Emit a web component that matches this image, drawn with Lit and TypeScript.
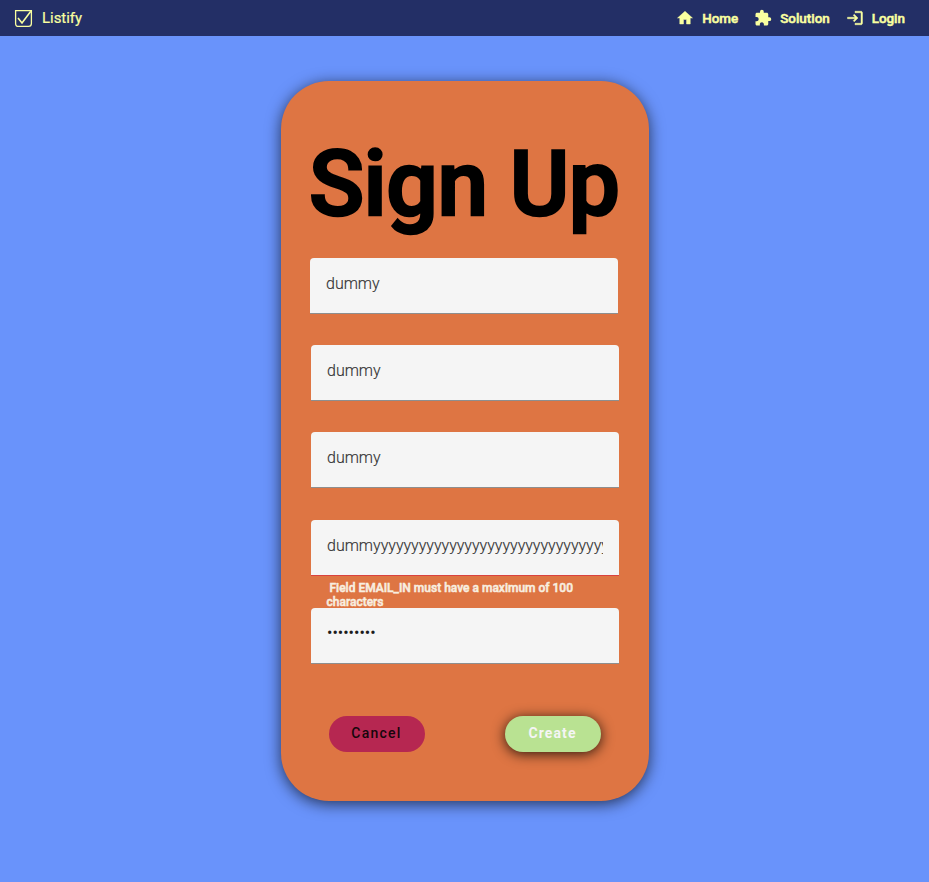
import { LitElement, html, css, svg } from "lit";
import { customElement, property } from "lit/decorators.js";

const icons = {
  home: svg`<path stroke="currentColor" stroke-width=".6" d="M10 20v-6h4v6h5v-8h3L12 3 2 12h3v8z"/>`,
  solution: svg`<path d="M20.500 11H19V7c0-1.100-.9-2-2-2h-4V3.500a2.500 2.500 0 0 0-5 0V5H4c-1.100 0-1.990.9-1.990 2v3.800H3.500c1.490 0 2.700 1.210 2.700 2.700s-1.210 2.700-2.700 2.700H2V20c0 1.100.9 2 2 2h3.800v-1.500c0-1.490 1.210-2.700 2.700-2.700s2.700 1.210 2.700 2.700V22H17c1.100 0 2-.9 2-2v-4h1.500a2.500 2.500 0 0 0 0-5z"/>`,
  login: svg`<path stroke="currentColor" stroke-width=".6" d="M11 7 9.600 8.400l2.600 2.600H2v2h10.200l-2.600 2.600L11 17l5-5zM20 19h-8v2h8c1.100 0 2-.9 2-2V5c0-1.100-.9-2-2-2h-8v2h8z"/>`,
};

@customElement("nav-bar")
export class NavBar extends LitElement {
  static styles = css`
    :host {
      display: flex;
      align-items: center;
      justify-content: space-between;
      box-sizing: border-box;
      height: 36px;
      padding: 0 24px 0 14px;
      background: #232f66;
      color: #f9ffa0;
    }
    .brand, .links, .link { display: flex; align-items: center; }
    .brand { gap: 9px; font-size: 14.900px; line-height: 20px; font-weight: 400; -webkit-text-stroke: 0.2px #f9ffa0; }
    .logo { display: block; width: 19px; height: 19px; }
    .links { gap: 16px; }
    .link {
      gap: 8px;
      font-size: 13.400px;
      line-height: 20px;
      font-weight: 500;
      -webkit-text-stroke: 0.5px #f9ffa0;
    }
    .link span { position: relative; top: 1px; }
    .icon { display: block; width: 18px; height: 18px; fill: currentColor; }
  `;

  render() {
    return html`
      <div class="brand">
        <svg class="logo" viewBox="0 0 19 19" fill="none" stroke="currentColor" stroke-width="1.300">
          <path d="M1.600 1.600H17.400V14.500Q17.400 17.400 14.500 17.400H4.500Q1.600 17.400 1.600 14.500z" />
          <path d="M4 9l4 5L16.800 2.200" stroke-width="1.600" />
        </svg>
        <span>Listify</span>
      </div>
      <nav class="links">
        ${[
          { label: "Home", icon: icons.home },
          { label: "Solution", icon: icons.solution },
          { label: "Login", icon: icons.login },
        ].map(
          (l) => html`<a class="link"><svg class="icon" viewBox="0 0 24 24">${l.icon}</svg><span>${l.label}</span></a>`
        )}
      </nav>
    `;
  }
}

@customElement("text-field")
export class TextField extends LitElement {
  @property() value = "";
  @property({ type: Boolean, reflect: true }) invalid = false;
  @property({ type: Boolean, reflect: true }) secret = false;

  static styles = css`
    :host {
      display: block;
      box-sizing: border-box;
      width: 308px;
      height: 56px;
      padding: 16px 16px 0;
      border-radius: 4px 4px 0 0;
      background: linear-gradient(#8e8e8e, #8e8e8e) bottom / 100% 1px no-repeat, #f5f5f5;
    }
    :host([invalid]) {
      background: linear-gradient(#d9423f, #d9423f) bottom / 100% 1px no-repeat, #f5f5f5;
    }
    .value {
      overflow: hidden;
      white-space: nowrap;
      font-size: 16px;
      line-height: 20px;
      font-weight: 300;
      color: #333;
      -webkit-text-stroke: 0.150px #333;
    }
    :host([secret]) { padding-top: 15px; }
    :host([secret]) .value { font-weight: 400; color: #1c1c1c; -webkit-text-stroke: 0; }
  `;

  render() {
    return html`<div class="value">${this.secret ? "•".repeat(this.value.length) : this.value}</div>`;
  }
}

@customElement("app-root")
export class AppRoot extends LitElement {
  static styles = css`
    :host {
      display: flex;
      flex-direction: column;
      min-height: 882px;
      background: #6993fb;
      font-family: Roboto, sans-serif;
    }
    .card {
      box-sizing: border-box;
      width: 368px;
      height: 720px;
      margin: 45px 280px 0 281px;
      padding: 46px 0 0 30px;
      border-radius: 48px;
      background: #de7543;
      box-shadow: 0 3px 15px rgba(0, 0, 0, 0.65);
    }
    .title {
      margin: 0 0 17px -2px;
      font-size: 91px;
      line-height: 114px;
      font-weight: 500;
      letter-spacing: -0.500px;
      -webkit-text-stroke: 2.700px #000;
      white-space: nowrap;
      color: #000;
    }
    .fields { display: grid; grid-template-rows: 87px 87px 88px 88px 56px; }
    .first { margin-left: -1px; }
    .error {
      margin: 5px 0 0 15.500px;
      width: 276px;
      font-size: 12px;
      line-height: 14px;
      font-weight: 500;
      white-space: pre-wrap;
      color: #f8efe0;
      -webkit-text-stroke: 0.500px #f8efe0;
    }
    .actions {
      display: flex;
      justify-content: space-between;
      margin-top: 52px;
      padding: 0 48px 0 18px;
    }
    .button {
      width: 96px;
      height: 36px;
      padding: 0 1px 2px 0;
      border: 0;
      border-radius: 18px;
      font: 500 14px/34px Roboto, sans-serif;
      letter-spacing: 1.250px;
    }
    .cancel { background: #b62751; color: #16060b; }
    .create {
      background: #b9e292;
      color: #f5f5f5;
      font-weight: 700;
      letter-spacing: 1.100px;
      box-shadow: 0 2px 13px rgba(0, 0, 0, 0.8);
    }
  `;

  render() {
    return html`
      <nav-bar></nav-bar>
      <main class="card">
        <h1 class="title">Sign Up</h1>
        <div class="fields">
          <text-field class="first" value="dummy"></text-field>
          <text-field value="dummy"></text-field>
          <text-field value="dummy"></text-field>
          <div>
            <text-field invalid value=${"dumm" + "y".repeat(96)}></text-field>
            <div class="error"> Field EMAIL_IN must have a maximum of 100 characters</div>
          </div>
          <text-field secret value="password1"></text-field>
        </div>
        <div class="actions">
          <button class="button cancel">Cancel</button>
          <button class="button create">Create</button>
        </div>
      </main>
    `;
  }
}
